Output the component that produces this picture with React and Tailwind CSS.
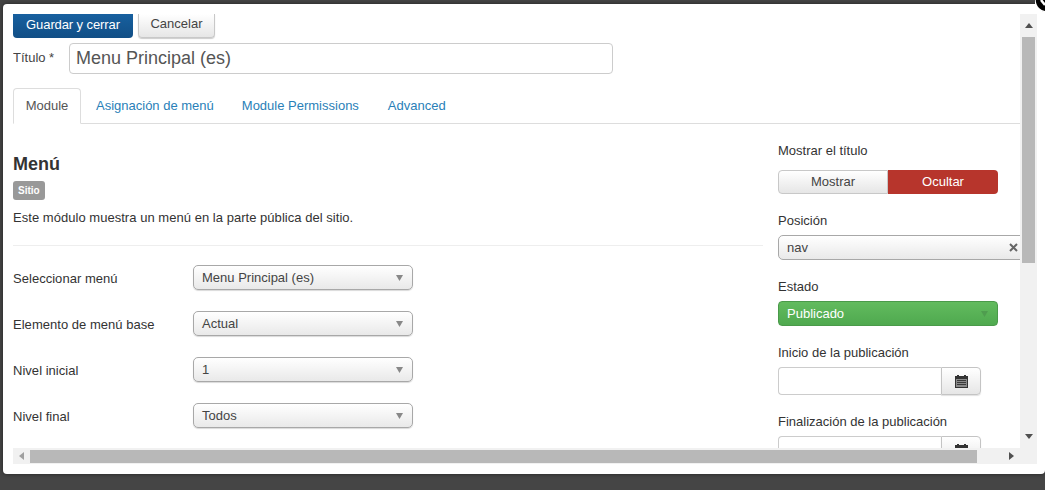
const selectCls =
  "flex h-[25px] w-[220px] items-center justify-between rounded-[5px] border border-[#a8a8a8] bg-gradient-to-b from-white to-[#e9e9e9] pl-2 pr-[9px] text-[13px] leading-none text-[#444] shadow-[0_1px_1px_rgba(0,0,0,0.15)]";

function Caret({ className }) {
  return (
    <svg width="7" height="6" viewBox="0 0 7 6" className={className}>
      <path d="M0 0h7L3.5 6z" fill="currentColor" />
    </svg>
  );
}

function Arrow({ dir }) {
  const paths = {
    up: "M0 5 4 0l4 5z",
    down: "M0 0h8L4 5z",
    left: "M5 0v8L0 4z",
    right: "M0 0v8l5-4z",
  };
  const size = dir === "up" || dir === "down" ? [8, 5] : [5, 8];
  const color = dir === "left" ? "#a0a0a0" : "#505050";
  return (
    <svg width={size[0]} height={size[1]} viewBox={`0 0 ${size[0]} ${size[1]}`}>
      <path d={paths[dir]} fill={color} />
    </svg>
  );
}

function SelectRow({ label, value }) {
  return (
    <div className="flex h-[25px] items-center">
      <label className="w-[180px] pt-[3px] text-[13px] tracking-[0.03px] text-[#333]">{label}</label>
      <div className={selectCls}>
        <span>{value}</span>
        <Caret className="text-[#888]" />
      </div>
    </div>
  );
}

function CalendarIcon() {
  return (
    <svg width="13" height="13" viewBox="0 0 13 13">
      <path d="M0 1h2V0h2v1h5V0h2v1h2v12H0z" fill="#333" />
      <path d="M1 4h11v8H1z" fill="#8a8a8a" />
      <path d="M2 5h9v1H2zM2 7h9v1H2zM2 9h9v1H2z" fill="#3a3a3a" />
    </svg>
  );
}

function DateField() {
  return (
    <div className="flex h-[28px] w-[203px] shrink-0">
      <div className="w-[163px] rounded-l-[4px] border border-r-0 border-[#ccc] bg-white" />
      <div className="flex w-[40px] items-center justify-center rounded-r-[4px] border border-[#c4c4c4] bg-gradient-to-b from-white to-[#e6e6e6] shadow-[0_1px_1px_rgba(0,0,0,0.12)]">
        <CalendarIcon />
      </div>
    </div>
  );
}

export default function App() {
  return (
    <div className="relative h-[490px] w-[1045px] overflow-hidden bg-[#454545] pt-[4px] pb-[16px] pl-[3px] font-['Liberation_Sans',Arial,sans-serif]">
      <div className="flex h-[470px] rounded-[4px] bg-white pt-[10px] pr-[8px] pb-[10px] pl-[10px] shadow-[0_0_4px_rgba(0,0,0,0.5)]">
        <div className="flex min-w-0 flex-1 flex-col">
          <div className="min-h-0 flex-1 overflow-hidden">
            <div className="flex gap-[5px]">
              <button className="h-[24px] w-[120px] rounded-b-[4px] bg-gradient-to-b from-[#17609f] to-[#124f86] pb-[3px] text-[13px] tracking-[-0.1px] text-white">
                Guardar y cerrar
              </button>
              <button className="h-[24px] w-[77px] rounded-b-[4px] border border-t-0 border-[#c8c8c8] bg-gradient-to-b from-white to-[#e6e6e6] pb-[3px] text-[13px] text-[#444] shadow-[0_1px_1px_rgba(0,0,0,0.2)]">
                Cancelar
              </button>
            </div>

            <div className="mt-[5px] flex items-center">
              <label className="w-[56px] pb-[1px] text-[13px] text-[#444]">Título *</label>
              <div className="flex h-[31px] w-[544px] items-center rounded-[4px] border border-[#ccc] bg-white px-[6px] text-[18px] text-[#555]">
                Menu Principal (es)
              </div>
            </div>

            <div className="mt-[14px] flex h-[36px] gap-[2px] border-b border-[#ddd] text-[13px]">
              <div className="flex h-[36px] w-[68px] items-center justify-center rounded-t-[4px] border border-b-white border-[#ddd] bg-white text-[#555]">
                Module
              </div>
              <a className="flex items-center px-[13px] text-[#2a7fb8]">Asignación de menú</a>
              <a className="flex items-center pr-[14px] pl-[13px] text-[#2a7fb8]">Module Permissions</a>
              <a className="flex items-center pr-[14px] pl-[13px] text-[#2a7fb8]">Advanced</a>
            </div>

            <div className="flex">
              <div className="w-[750px] shrink-0">
                <h2 className="mt-[29px] text-[18px] leading-[22px] font-bold text-[#333]">Menú</h2>
                <span className="mt-[6px] block w-fit rounded-[3px] bg-[#999] px-[5px] py-[2px] text-[10px] leading-[15px] font-bold text-white">
                  Sitio
                </span>
                <p className="mt-[9px] text-[13px] leading-[18px] tracking-[0.035px] text-[#333]">
                  Este módulo muestra un menú en la parte pública del sitio.
                </p>
                <div className="mt-[18px] border-t border-[#eee]" />
                <div className="mt-[19px] flex flex-col gap-[21px]">
                  <SelectRow label="Seleccionar menú" value="Menu Principal (es)" />
                  <SelectRow label="Elemento de menú base" value="Actual" />
                  <SelectRow label="Nivel inicial" value="1" />
                  <SelectRow label="Nivel final" value="Todos" />
                </div>
              </div>

              <div className="ml-[15px] w-[260px] shrink-0 pt-[18px] text-[13px] leading-[18px] text-[#333]">
                <div>Mostrar el título</div>
                <div className="mt-[10px] flex h-[24px] w-[220px]">
                  <div className="flex w-[110px] items-center justify-center rounded-l-[4px] border border-[#c8c8c8] bg-gradient-to-b from-white to-[#e6e6e6] text-[#444]">
                    Mostrar
                  </div>
                  <div className="flex w-[110px] items-center justify-center rounded-r-[4px] bg-[#b7352c] text-white">
                    Ocultar
                  </div>
                </div>

                <div className="mt-[18px]">Posición</div>
                <div className="mt-[5px] flex h-[25px] w-[244px] items-center justify-between rounded-l-[5px] border border-[#a8a8a8] bg-gradient-to-b from-white to-[#e9e9e9] pr-[3px] pl-[8px] text-[#444]">
                  <span>nav</span>
                  <svg width="9" height="9" viewBox="0 0 9 9">
                    <path d="M1 1l7 7M8 1 1 8" stroke="#666" strokeWidth="2" />
                  </svg>
                </div>

                <div className="mt-[18px]">Estado</div>
                <div className="mt-[5px] flex h-[25px] w-[220px] items-center justify-between rounded-[4px] border border-[#4a9a4a] bg-gradient-to-b from-[#62bb5e] to-[#4fa94f] pr-[9px] pl-[8px] text-white">
                  <span>Publicado</span>
                  <Caret className="text-[#4f9d4f]" />
                </div>

                <div className="mt-[18px]">Inicio de la publicación</div>
                <div className="mt-[5px]">
                  <DateField />
                </div>

                <div className="mt-[18px]">Finalización de la publicación</div>
                <div className="mt-[5px]">
                  <DateField />
                </div>
              </div>
            </div>
          </div>

          <div className="flex h-[16px] shrink-0 items-center bg-[#f1f1f1]">
            <div className="flex w-[17px] justify-center">
              <Arrow dir="left" />
            </div>
            <div className="h-[13px] w-[947px] bg-[#b8b8b8]" />
            <div className="flex flex-1 justify-end pr-[6px]">
              <Arrow dir="right" />
            </div>
          </div>
        </div>

        <div className="flex w-[17px] shrink-0 flex-col bg-[#f1f1f1]">
          <div className="flex h-[23px] shrink-0 items-center justify-center">
            <Arrow dir="up" />
          </div>
          <div className="mx-[2px] h-[226px] shrink-0 bg-[#b8b8b8]" />
          <div className="flex-1" />
          <div className="mb-[16px] flex h-[23px] shrink-0 items-center justify-center">
            <Arrow dir="down" />
          </div>
        </div>
      </div>

      <svg width="10" height="14" viewBox="0 0 10 14" className="absolute top-0 right-0">
        <circle cx="12" cy="0" r="12" fill="#000" stroke="#fff" strokeWidth="1.5" />
        <path d="M6 0l4 5" stroke="#fff" strokeWidth="2.5" />
      </svg>
    </div>
  );
}
